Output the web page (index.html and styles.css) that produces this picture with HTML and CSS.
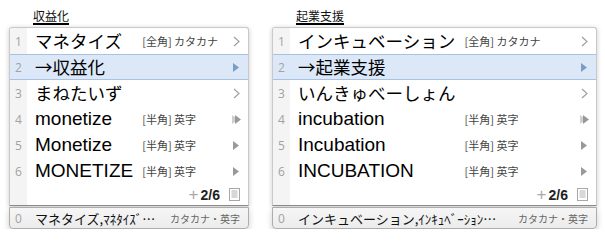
FILE: index.html
```html
<!DOCTYPE html>
<html lang="ja">
<head>
  <meta charset="UTF-8" />
  <title>IME candidates</title>
  <link rel="stylesheet" href="styles.css">
</head>
<body>
  <div class="screen">

    <div class="ime ime-a">
      <div class="comp"><span>収益化</span></div>
      <div class="cands">
        <div class="row">
          <span class="num">1</span><span class="word jp">マネタイズ</span><span class="note">[全角] カタカナ</span>
          <span class="arrow"><svg width="7" height="11" viewBox="0 0 7 11"><polyline points="1,1 6,5.5 1,10" fill="none" stroke="#a0a0a0" stroke-width="1.2"/></svg></span>
        </div>
        <div class="row sel">
          <span class="num">2</span><span class="word jp">→収益化</span><span class="note"></span>
          <span class="arrow"><svg width="6" height="9" viewBox="0 0 6 9"><polygon points="0,0 6,4.5 0,9" fill="#7d9cc4"/></svg></span>
        </div>
        <div class="row">
          <span class="num">3</span><span class="word jp">まねたいず</span><span class="note"></span>
          <span class="arrow"><svg width="7" height="11" viewBox="0 0 7 11"><polyline points="1,1 6,5.5 1,10" fill="none" stroke="#a0a0a0" stroke-width="1.2"/></svg></span>
        </div>
        <div class="row">
          <span class="num">4</span><span class="word">monetize</span><span class="note">[半角] 英字</span>
          <span class="arrow"><svg width="9" height="9" viewBox="0 0 9 9"><polygon points="0,0 6,4.5 0,9" fill="#cfcfcf"/><polygon points="3,0 9,4.5 3,9" fill="#999"/></svg></span>
        </div>
        <div class="row">
          <span class="num">5</span><span class="word">Monetize</span><span class="note">[半角] 英字</span>
          <span class="arrow"><svg width="6" height="9" viewBox="0 0 6 9"><polygon points="0,0 6,4.5 0,9" fill="#999"/></svg></span>
        </div>
        <div class="row">
          <span class="num">6</span><span class="word">MONETIZE</span><span class="note">[半角] 英字</span>
          <span class="arrow"><svg width="6" height="9" viewBox="0 0 6 9"><polygon points="0,0 6,4.5 0,9" fill="#999"/></svg></span>
        </div>
        <div class="row foot">
          <span class="num"></span>
          <span class="page"><span class="plus">+</span><b>2/6</b>
            <svg width="11" height="13" viewBox="0 0 11 13"><rect x="0.5" y="0.5" width="10" height="12" fill="#fff" stroke="#a8a8a8"/><path d="M2.5 3h6M2.5 5h6M2.5 7h6M2.5 9h6" stroke="#b0b0b0"/></svg>
          </span>
        </div>
      </div>
      <div class="bar">
        <span class="num">0</span>
        <span class="bar-text">マネタイズ,ﾏﾈﾀｲｽﾞ…</span>
        <span class="bar-note">カタカナ・英字</span>
      </div>
    </div>

    <div class="ime ime-b">
      <div class="comp"><span>起業支援</span></div>
      <div class="cands">
        <div class="row">
          <span class="num">1</span><span class="word jp">インキュベーション</span><span class="note">[全角] カタカナ</span>
          <span class="arrow"><svg width="7" height="11" viewBox="0 0 7 11"><polyline points="1,1 6,5.5 1,10" fill="none" stroke="#a0a0a0" stroke-width="1.2"/></svg></span>
        </div>
        <div class="row sel">
          <span class="num">2</span><span class="word jp">→起業支援</span><span class="note"></span>
          <span class="arrow"><svg width="6" height="9" viewBox="0 0 6 9"><polygon points="0,0 6,4.5 0,9" fill="#7d9cc4"/></svg></span>
        </div>
        <div class="row">
          <span class="num">3</span><span class="word jp">いんきゅべーしょん</span><span class="note"></span>
          <span class="arrow"><svg width="7" height="11" viewBox="0 0 7 11"><polyline points="1,1 6,5.5 1,10" fill="none" stroke="#a0a0a0" stroke-width="1.2"/></svg></span>
        </div>
        <div class="row">
          <span class="num">4</span><span class="word">incubation</span><span class="note">[半角] 英字</span>
          <span class="arrow"><svg width="9" height="9" viewBox="0 0 9 9"><polygon points="0,0 6,4.5 0,9" fill="#cfcfcf"/><polygon points="3,0 9,4.5 3,9" fill="#999"/></svg></span>
        </div>
        <div class="row">
          <span class="num">5</span><span class="word">Incubation</span><span class="note">[半角] 英字</span>
          <span class="arrow"><svg width="6" height="9" viewBox="0 0 6 9"><polygon points="0,0 6,4.5 0,9" fill="#999"/></svg></span>
        </div>
        <div class="row">
          <span class="num">6</span><span class="word">INCUBATION</span><span class="note">[半角] 英字</span>
          <span class="arrow"><svg width="6" height="9" viewBox="0 0 6 9"><polygon points="0,0 6,4.5 0,9" fill="#999"/></svg></span>
        </div>
        <div class="row foot">
          <span class="num"></span>
          <span class="page"><span class="plus">+</span><b>2/6</b>
            <svg width="11" height="13" viewBox="0 0 11 13"><rect x="0.5" y="0.5" width="10" height="12" fill="#fff" stroke="#a8a8a8"/><path d="M2.5 3h6M2.5 5h6M2.5 7h6M2.5 9h6" stroke="#b0b0b0"/></svg>
          </span>
        </div>
      </div>
      <div class="bar">
        <span class="num">0</span>
        <span class="bar-text">インキュベーション,ｲﾝｷｭﾍﾞｰｼｮﾝ…</span>
        <span class="bar-note">カタカナ・英字</span>
      </div>
    </div>

  </div>
</body>
</html>
```

FILE: styles.css
```css
body {
  margin: 0;
  background-color: #fff;
  color: #111;
  font-family: "Liberation Sans", "Noto Sans CJK JP", sans-serif;
}
.screen {
  display: flex;
  align-items: flex-start;
  gap: 23px;
  padding-left: 9px;
}
.ime {
  display: flex;
  flex-direction: column;
}
.ime-a {
  width: 240px;
}
.ime-b {
  width: 325px;
}
.comp {
  height: 27px;
  box-sizing: border-box;
  display: flex;
  align-items: flex-end;
  padding: 0 0 2px 24px;
}
.comp span {
  font-family: "Noto Sans CJK JP", sans-serif;
  font-size: 12px;
  line-height: 14px;
  border-bottom: 2px solid #000;
}
.cands {
  display: grid;
  grid-template-columns: 17px auto 1fr 24px;
  background-color: #fff;
  border: 1px solid #c9c9c9;
  border-bottom-color: #8e8e8e;
  border-radius: 3px 3px 0 0;
  box-shadow: 0 1px 5px rgba(0, 0, 0, 0.22);
  overflow: hidden;
}
.row {
  grid-column: 1 / -1;
  display: grid;
  grid-template-columns: subgrid;
  align-items: center;
  height: 26px;
  box-sizing: border-box;
}
.row.sel {
  background-color: #dce8f8;
  border-top: 1px solid #a7c2e2;
  border-bottom: 1px solid #a7c2e2;
}
.num {
  align-self: stretch;
  display: flex;
  align-items: center;
  justify-content: center;
  background-color: #f4f4f4;
  color: #a2a2a2;
  font-family: "Open Sans", sans-serif;
  font-size: 12px;
}
.sel .num {
  background-color: transparent;
}
.word {
  padding: 0 9px 0 8px;
  font-size: 19px;
  line-height: 24px;
  white-space: nowrap;
  color: #000;
}
.word.jp {
  font-family: "Noto Sans CJK JP", sans-serif;
  font-size: 17.5px;
}
.note {
  font-family: "Noto Sans CJK JP", sans-serif;
  font-size: 11px;
  color: #444;
  white-space: nowrap;
}
.arrow {
  display: flex;
  justify-content: center;
}
.row.foot {
  height: 21px;
}
.page {
  grid-column: 2 / -1;
  justify-self: end;
  display: flex;
  align-items: center;
  gap: 2px;
  padding-right: 8px;
}
.page .plus {
  color: #aaa;
  font-size: 17px;
  font-weight: 300;
}
.page b {
  font-size: 14px;
  font-weight: 600;
  color: #222;
  margin-right: 7px;
}
.bar {
  display: flex;
  align-items: center;
  height: 22px;
  margin-top: 1px;
  box-sizing: border-box;
  background: linear-gradient(#f6f6f6, #ececec);
  border: 1px solid #adadad;
  border-radius: 0 0 4px 4px;
  box-shadow: 0 3px 6px rgba(0, 0, 0, 0.2);
}
.bar .num {
  width: 17px;
  flex-shrink: 0;
  background-color: transparent;
}
.bar-text {
  padding-left: 8px;
  font-family: "Noto Sans CJK JP", sans-serif;
  font-size: 13px;
  color: #111;
  white-space: nowrap;
}
.bar-note {
  margin-left: auto;
  padding: 0 8px 0 4px;
  flex-shrink: 0;
  font-family: "Noto Sans CJK JP", sans-serif;
  font-size: 10px;
  color: #666;
  white-space: nowrap;
}
```
